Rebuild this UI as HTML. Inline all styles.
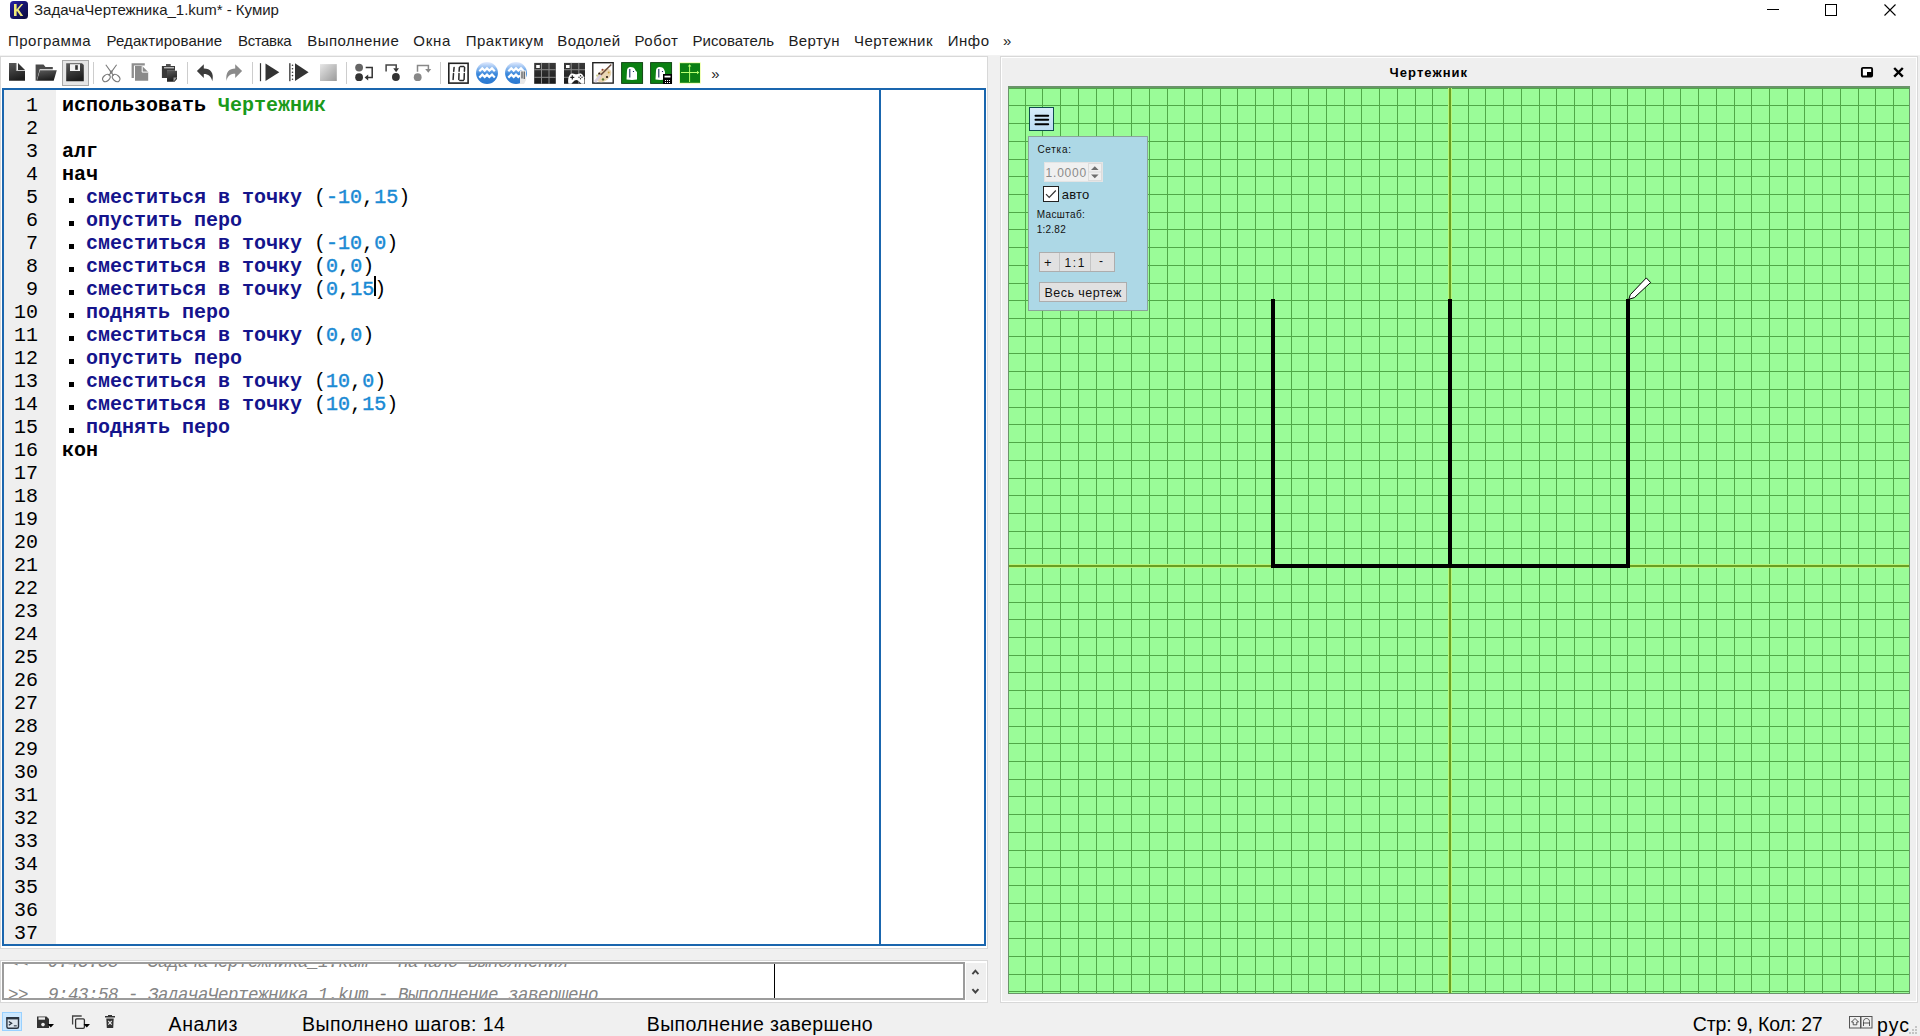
<!DOCTYPE html>
<html><head><meta charset="utf-8">
<style>
*{box-sizing:border-box}
html,body{margin:0;padding:0}
body{width:1920px;height:1036px;overflow:hidden;background:#f0f0f0;position:relative;font-family:"Liberation Sans",sans-serif;color:#000}
.a{position:absolute}
.t{white-space:pre}
.ui{font-family:"Liberation Sans",sans-serif;white-space:pre;line-height:1}
.ln{position:absolute;left:4px;width:34px;text-align:right;font:20px/23px "Liberation Mono",monospace;color:#000}
.cl{position:absolute;left:62px;font:bold 20px/23px "Liberation Mono",monospace;color:#000;white-space:pre}
.g{color:#1a9a1a}
.b{color:#14148c}
.n{color:#1a8ad4;font-weight:normal;-webkit-text-stroke:0.45px #1a8ad4}
.p{font-weight:normal}
.dot{display:inline-block;width:12px;height:23px;position:relative;vertical-align:top}
.dot:after{content:"";position:absolute;left:7px;top:12px;width:5px;height:4.5px;background:#000}
</style></head>
<body>
<div class="a" style="left:0;top:0;width:1920px;height:56px;background:#fff"></div>
<div class="a" style="left:0;top:55px;width:1920px;height:1px;background:#f2f2f2"></div>
<svg class="a" style="left:8px;top:0" width="22" height="20"><defs><linearGradient id="kg" x1="0" y1="0" x2="1" y2="1"><stop offset="0" stop-color="#2a20a8"/><stop offset="0.5" stop-color="#16146a"/><stop offset="1" stop-color="#0a0a3a"/></linearGradient></defs><rect x="2" y="1" width="18" height="18" rx="3.5" fill="url(#kg)"/><path d="M15.3 3.9H23V3.9" fill="none"/><path d="M14 4H16.6V9.4L21.2 4H23.2L18.6 9.6L23.2 15.9H20.5L17 11.1L16.6 11.5V15.9H14Z" transform="translate(-8 0)" fill="#f0e878"/></svg>
<div class="a t" style="left:34px;top:2.4px;font:normal normal 15px/1 'Liberation Sans';letter-spacing:0px;color:#1c1c1c;">ЗадачаЧертежника_1.kum* - Кумир</div>
<div class="a" style="left:1767px;top:9px;width:12px;height:1px;background:#000"></div>
<div class="a" style="left:1825px;top:4px;width:12px;height:12px;border:1px solid #000"></div>
<svg class="a" style="left:1884px;top:4px" width="12" height="12" viewBox="0 0 12 12"><path d="M0.5 0.5L11.5 11.5M11.5 0.5L0.5 11.5" stroke="#000" stroke-width="1.1"/></svg>
<div class="a t" style="left:8.0px;top:33.4px;font:normal normal 15px/1 'Liberation Sans';letter-spacing:0.5px;color:#1c1c1c;">Программа</div>
<div class="a t" style="left:106.5px;top:33.4px;font:normal normal 15px/1 'Liberation Sans';letter-spacing:0.1px;color:#1c1c1c;">Редактирование</div>
<div class="a t" style="left:238.0px;top:33.4px;font:normal normal 15px/1 'Liberation Sans';letter-spacing:-0.367px;color:#1c1c1c;">Вставка</div>
<div class="a t" style="left:307.3px;top:33.4px;font:normal normal 15px/1 'Liberation Sans';letter-spacing:0.467px;color:#1c1c1c;">Выполнение</div>
<div class="a t" style="left:413.2px;top:33.4px;font:normal normal 15px/1 'Liberation Sans';letter-spacing:0.8px;color:#1c1c1c;">Окна</div>
<div class="a t" style="left:465.7px;top:33.4px;font:normal normal 15px/1 'Liberation Sans';letter-spacing:0.5px;color:#1c1c1c;">Практикум</div>
<div class="a t" style="left:557.3px;top:33.4px;font:normal normal 15px/1 'Liberation Sans';letter-spacing:0.417px;color:#1c1c1c;">Водолей</div>
<div class="a t" style="left:634.4px;top:33.4px;font:normal normal 15px/1 'Liberation Sans';letter-spacing:0.575px;color:#1c1c1c;">Робот</div>
<div class="a t" style="left:692.5px;top:33.4px;font:normal normal 15px/1 'Liberation Sans';letter-spacing:0.022px;color:#1c1c1c;">Рисователь</div>
<div class="a t" style="left:788.4px;top:33.4px;font:normal normal 15px/1 'Liberation Sans';letter-spacing:0.38px;color:#1c1c1c;">Вертун</div>
<div class="a t" style="left:854.0px;top:33.4px;font:normal normal 15px/1 'Liberation Sans';letter-spacing:0.5px;color:#1c1c1c;">Чертежник</div>
<div class="a t" style="left:947.8px;top:33.4px;font:normal normal 15px/1 'Liberation Sans';letter-spacing:0.5px;color:#1c1c1c;">Инфо</div>
<div class="a t" style="left:1003.0px;top:33.4px;font:normal normal 15px/1 'Liberation Sans';letter-spacing:0px;color:#1c1c1c;">»</div>
<div class="a" style="left:0;top:56px;width:988px;height:893px;background:#fff;border:1px solid #d8d8d8"></div>
<svg class="a" style="left:0;top:0" width="740" height="90" viewBox="0 0 740 90">
<defs>
<linearGradient id="gd" x1="0" y1="0" x2="0.3" y2="1"><stop offset="0" stop-color="#5a5a5a"/><stop offset="1" stop-color="#1e1e1e"/></linearGradient>
<linearGradient id="gg" x1="0" y1="0" x2="1" y2="1"><stop offset="0" stop-color="#e6e6e6"/><stop offset="1" stop-color="#9a9a9a"/></linearGradient>
<linearGradient id="aq" x1="0" y1="0" x2="0" y2="1"><stop offset="0" stop-color="#e4ecff"/><stop offset="0.3" stop-color="#8ab8ee"/><stop offset="0.55" stop-color="#3a88dc"/><stop offset="1" stop-color="#2a78d0"/></linearGradient>
<linearGradient id="gr" x1="0" y1="0" x2="0" y2="1"><stop offset="0" stop-color="#3a3a3a"/><stop offset="0.5" stop-color="#2a2a2a"/><stop offset="1" stop-color="#1a1a1a"/></linearGradient>
</defs>
<!-- new doc -->
<path d="M9 63H16.3V70.8H25V80.8H9Z" fill="url(#gd)"/>
<path d="M18 63L25 70H18Z" fill="#333"/>
<path d="M16.5 63V70.5" stroke="#aaa" stroke-width="1.2"/>
<!-- open folder -->
<path d="M35.6 64.4H43.5L45.5 67H52.8V69.3H39.7L36.8 80.8H35.6Z" fill="#4a4a4a"/>
<path d="M39.9 70.2H56.8L53.7 80.8H36.9Z" fill="url(#gd)"/>
<!-- save button -->
<rect x="62.5" y="60.5" width="26" height="25" fill="#e6e6e6" stroke="#a9a9a9"/>
<path d="M66.2 63.3H82L83.8 65.1V81.3H66.2Z" fill="url(#gd)"/>
<rect x="70" y="64.2" width="10" height="6.8" fill="#f2f2f2"/>
<rect x="75.2" y="65.2" width="2.6" height="4.6" fill="#333"/>
<!-- separators -->
<rect x="93" y="62" width="1" height="22" fill="#cdcdcd"/>
<rect x="187" y="62" width="1" height="22" fill="#cdcdcd"/>
<rect x="252" y="62" width="1" height="22" fill="#cdcdcd"/>
<rect x="346" y="62" width="1" height="22" fill="#cdcdcd"/>
<rect x="440" y="62" width="1" height="22" fill="#cdcdcd"/>
<!-- scissors -->
<g fill="none" stroke="#7a7a7a" stroke-width="1.1">
<path d="M105.8 64.8L113.6 75.6M116.6 64.8L108.8 75.6"/>
<circle cx="111.2" cy="72" r="0.9"/>
<ellipse cx="106.4" cy="78" rx="4.2" ry="3" transform="rotate(-42 106.4 78)"/>
<ellipse cx="116.1" cy="78" rx="4.2" ry="3" transform="rotate(42 116.1 78)"/>
</g>
<!-- copy -->
<path d="M131.6 63.3H144.8V65.6H133.9V78H131.6Z" fill="#8e8e8e"/>
<path d="M135 66.1H142.2L148.2 72.1V80.8H135Z" fill="#8a8a8a"/>
<path d="M142.2 66.1V72.1H148.2" fill="none" stroke="#fff" stroke-width="1"/>
<!-- paste -->
<path d="M161.9 66.1H175V70.8H167V78H161.9Z" fill="#3a3a3a"/>
<rect x="166" y="64" width="4.7" height="2.4" fill="#555"/>
<rect x="164" y="67.3" width="10" height="1" fill="#eee"/>
<path d="M167 70.8H177V79L174.5 81.8H167Z" fill="url(#gd)"/>
<path d="M177 77.5L173.5 81.8V77.5Z" fill="#999"/>
<!-- undo -->
<path d="M196.9 71.1L203.8 64.3V68.4C210 68.2 214.5 72.5 212.3 81.2C211.2 76 208 73.8 203.8 73.9V78Z" fill="#3c3c3c"/>
<!-- redo -->
<path d="M242.1 71.1L235.2 64.3V68.6C229.5 68.6 225.2 72 226.5 81C227.5 75.5 231 73.8 235.2 73.8V78Z" fill="#8a8a8a"/>
<!-- run -->
<rect x="259.9" y="63.2" width="1.2" height="18" fill="#333"/>
<path d="M265.5 63.5L279.3 72.3L265.5 81Z" fill="#333"/>
<!-- step run -->
<rect x="289.2" y="63.2" width="1.3" height="18" fill="#333"/>
<g fill="#333"><circle cx="292.5" cy="65.2" r="0.8"/><circle cx="292.5" cy="68.8" r="0.8"/><circle cx="292.5" cy="72.2" r="0.8"/><circle cx="292.5" cy="75.6" r="0.8"/><circle cx="292.5" cy="79.2" r="0.8"/></g>
<path d="M295 63.3L308.6 72.3L295 81Z" fill="#333"/>
<!-- stop -->
<rect x="320" y="64.1" width="16.8" height="16.9" fill="url(#gg)"/>
<!-- step over -->
<circle cx="359.1" cy="67.6" r="3.9" fill="#666"/>
<circle cx="359.1" cy="77.2" r="3.9" fill="#333"/>
<path d="M365.7 67.6H372.2V77.5H367" fill="none" stroke="#333" stroke-width="1.5"/>
<path d="M364.6 77.5L368.2 74.6V80.4Z" fill="#333"/>
<!-- step in -->
<path d="M386.1 71.6V65H396.2V68.5" fill="none" stroke="#444" stroke-width="1.5"/>
<path d="M393.3 68.3H399L396.1 72.2Z" fill="#333"/>
<circle cx="395.9" cy="77" r="3.9" fill="#333"/>
<!-- step out -->
<path d="M417.5 71.8V65.5H428.4V69" fill="none" stroke="#888" stroke-width="1.5"/>
<path d="M425.2 69H431.2L428.3 72.8Z" fill="#888"/>
<circle cx="417.7" cy="77.2" r="3.9" fill="#888"/>
<!-- 10 box -->
<rect x="448.8" y="63.3" width="19.3" height="19.8" fill="#fff" stroke="#222" stroke-width="1.6"/>
<g stroke="#2a2a2a" stroke-width="1.5" fill="none" stroke-linecap="round">
<path d="M454.1 67.4L453.7 71.3M453.5 73.6L453.1 79.5"/>
<path d="M459.4 67.4L459.1 71.3M459 73.6L458.8 79.5M464.6 67.4L464.4 71.3M464.3 73.6L464.1 79.5M460.3 66.4H463.8M459.9 80.5H463.4"/>
</g>
<!-- aquarius 1 -->
<circle cx="487" cy="72.95" r="10.95" fill="url(#aq)"/>
<path d="M479.3 71.3L482.3 68.3L484.7 70.6L487 68.3L489.3 70.6L492 68.3L494.8 71.2" fill="none" stroke="#fff" stroke-width="2.2" stroke-linejoin="miter"/>
<path d="M479.3 77.6L482.3 74.6L484.7 76.9L487 74.6L489.3 76.9L492 74.6L494.8 77.5" fill="none" stroke="#fff" stroke-width="2.2"/>
<!-- aquarius 2 -->
<circle cx="516" cy="72.95" r="10.95" fill="url(#aq)"/>
<path d="M508.3 71.3L511.3 68.3L513.7 70.6L516 68.3L518.3 70.6L521 68.3L523.8 71.2" fill="none" stroke="#fff" stroke-width="2.2"/>
<path d="M508.3 77.6L511.3 74.6L513.7 76.9L516 74.6L518.3 76.9L520 75.5" fill="none" stroke="#fff" stroke-width="2.2"/>
<path d="M520 70.5H526V80L524 84H520Z" fill="#e8e8e8"/>
<g stroke="#222" stroke-width="0.9"><path d="M522 71.5V78.5M524.2 71.5V79"/></g>
<!-- grid -->
<rect x="534.2" y="62.9" width="21.6" height="20.9" fill="url(#gr)"/>
<g fill="#8a8a8a"><rect x="541" y="62.9" width="1" height="20.9"/><rect x="548.5" y="62.9" width="1" height="20.9"/><rect x="534.2" y="69.2" width="21.6" height="1"/><rect x="534.2" y="76.8" width="21.6" height="1"/></g>
<rect x="536.2" y="65" width="3.6" height="3" fill="#fff"/>
<!-- grid game -->
<rect x="564" y="62.9" width="21" height="20.9" fill="url(#gr)"/>
<g fill="#8a8a8a"><rect x="570.7" y="62.9" width="1" height="20.9"/><rect x="578.3" y="62.9" width="1" height="20.9"/><rect x="564" y="69.2" width="21" height="1"/><rect x="564" y="76.8" width="21" height="1"/></g>
<rect x="566" y="65" width="3.6" height="3" fill="#fff"/>
<path d="M568.5 83.8C567.5 80 568.5 74.5 571.8 73.5C573.8 73 575 74.3 576.3 74.3C577.6 74.3 578.8 73 580.8 73.5C584 74.5 585 80 584.3 83.8H581.5L578 80.5C576.5 79.8 576 79.8 574.6 80.5L571.2 83.8Z" fill="#fff"/>
<g fill="#222"><rect x="570.3" y="76.8" width="4" height="1.2"/><rect x="571.7" y="75.3" width="1.2" height="4.2"/><circle cx="580.5" cy="75.8" r="0.7"/><circle cx="580.5" cy="78.8" r="0.7"/><circle cx="579" cy="77.3" r="0.7"/><circle cx="582" cy="77.3" r="0.7"/></g>
<!-- painter -->
<rect x="592.8" y="62.7" width="20.4" height="20.4" fill="#fff" stroke="#222" stroke-width="1.4"/>
<ellipse cx="604" cy="75.3" rx="8.4" ry="5.6" fill="#ead6b2" transform="rotate(-40 604 75.3)"/>
<circle cx="599.3" cy="73.7" r="1.1" fill="#2a1a10"/><circle cx="607" cy="77" r="1.1" fill="#2a1a10"/>
<circle cx="603" cy="79.4" r="1.2" fill="#5a7a30"/><circle cx="608.7" cy="72.6" r="1" fill="#c8a040"/>
<circle cx="602.5" cy="69.8" r="1" fill="#904030"/><circle cx="597" cy="75.5" r="1" fill="#c8d090"/>
<path d="M611.3 64.5L600.5 75.2" stroke="#6a4a3a" stroke-width="1.5"/>
<path d="M600.8 75L595 81.8" stroke="#d8d0e0" stroke-width="2.6"/>
<!-- green 1 -->
<rect x="621.6" y="62.6" width="21" height="20.8" fill="#0b7f12" stroke="#0a3d0c" stroke-width="0.9"/>
<path d="M627 70.5C627 68.5 628.5 67 630.5 67C633 67 635 68 635.5 70.5L637 72V79.5C634 80 630 80 626.5 79.5Z" fill="#fff"/>
<path d="M629.8 69V77.5M633.5 71V72" stroke="#1a2a60" stroke-width="1.1"/>
<!-- green 2 -->
<rect x="650.6" y="62.6" width="21" height="20.8" fill="#0b7f12" stroke="#0a3d0c" stroke-width="0.9"/>
<path d="M656 70.5C656 68.5 657.5 67 659.5 67C662 67 664 68 664.5 70.5L665 72V79.5C662 80 659 80 655.5 79.5Z" fill="#fff"/>
<path d="M658.8 69V77.5M662.5 71V72" stroke="#1a2a60" stroke-width="1.1"/>
<rect x="663" y="74" width="9" height="10" fill="#000"/>
<rect x="664.5" y="75.7" width="6" height="1.8" fill="#fff"/>
<g fill="#fff" shape-rendering="crispEdges"><rect x="665" y="80" width="1" height="1"/><rect x="667" y="80" width="1" height="1"/><rect x="669" y="80" width="1" height="1"/><rect x="665" y="82" width="1" height="1"/><rect x="667" y="82" width="1" height="1"/><rect x="669" y="82" width="1" height="1"/></g>
<!-- green axes -->
<rect x="679.3" y="62.4" width="21.4" height="21.2" fill="#eaff9a"/>
<rect x="680" y="63.2" width="20" height="19.6" fill="#0b7f12"/>
<path d="M689.6 65V82M681 72.5H698.5" stroke="#b8ff70" stroke-width="1"/>
<path d="M689.6 64.3L687.8 66.6H691.4Z M699.3 72.5L697 70.7V74.3Z" fill="#b8ff70"/>
</svg>
<div class="a ui" style="left:711.3px;top:66.4px;font-size:15px;color:#222">»</div>

<div class="a" style="left:2px;top:88px;width:984px;height:858px;border:2px solid #1a66ae;background:#fff"></div>
<div class="a" style="left:4px;top:90px;width:52px;height:854px;background:#efefef"></div>
<div class="a" style="left:879px;top:90px;width:2px;height:854px;background:#1a66ae"></div>
<div class="ln" style="top:94px">1</div>
<div class="ln" style="top:117px">2</div>
<div class="ln" style="top:140px">3</div>
<div class="ln" style="top:163px">4</div>
<div class="ln" style="top:186px">5</div>
<div class="ln" style="top:209px">6</div>
<div class="ln" style="top:232px">7</div>
<div class="ln" style="top:255px">8</div>
<div class="ln" style="top:278px">9</div>
<div class="ln" style="top:301px">10</div>
<div class="ln" style="top:324px">11</div>
<div class="ln" style="top:347px">12</div>
<div class="ln" style="top:370px">13</div>
<div class="ln" style="top:393px">14</div>
<div class="ln" style="top:416px">15</div>
<div class="ln" style="top:439px">16</div>
<div class="ln" style="top:462px">17</div>
<div class="ln" style="top:485px">18</div>
<div class="ln" style="top:508px">19</div>
<div class="ln" style="top:531px">20</div>
<div class="ln" style="top:554px">21</div>
<div class="ln" style="top:577px">22</div>
<div class="ln" style="top:600px">23</div>
<div class="ln" style="top:623px">24</div>
<div class="ln" style="top:646px">25</div>
<div class="ln" style="top:669px">26</div>
<div class="ln" style="top:692px">27</div>
<div class="ln" style="top:715px">28</div>
<div class="ln" style="top:738px">29</div>
<div class="ln" style="top:761px">30</div>
<div class="ln" style="top:784px">31</div>
<div class="ln" style="top:807px">32</div>
<div class="ln" style="top:830px">33</div>
<div class="ln" style="top:853px">34</div>
<div class="ln" style="top:876px">35</div>
<div class="ln" style="top:899px">36</div>
<div class="ln" style="top:922px">37</div>
<div class="cl" style="top:94px">использовать <span class="g">Чертежник</span></div>
<div class="cl" style="top:140px">алг</div>
<div class="cl" style="top:163px">нач</div>
<div class="cl" style="top:186px"><span class="dot"></span> <span class="b">сместиться в точку</span> <span class="p">(</span><span class="n">-10</span><span class="p">,</span><span class="n">15</span><span class="p">)</span></div>
<div class="cl" style="top:209px"><span class="dot"></span> <span class="b">опустить перо</span></div>
<div class="cl" style="top:232px"><span class="dot"></span> <span class="b">сместиться в точку</span> <span class="p">(</span><span class="n">-10</span><span class="p">,</span><span class="n">0</span><span class="p">)</span></div>
<div class="cl" style="top:255px"><span class="dot"></span> <span class="b">сместиться в точку</span> <span class="p">(</span><span class="n">0</span><span class="p">,</span><span class="n">0</span><span class="p">)</span></div>
<div class="cl" style="top:278px"><span class="dot"></span> <span class="b">сместиться в точку</span> <span class="p">(</span><span class="n">0</span><span class="p">,</span><span class="n">15</span><span class="p">)</span></div>
<div class="cl" style="top:301px"><span class="dot"></span> <span class="b">поднять перо</span></div>
<div class="cl" style="top:324px"><span class="dot"></span> <span class="b">сместиться в точку</span> <span class="p">(</span><span class="n">0</span><span class="p">,</span><span class="n">0</span><span class="p">)</span></div>
<div class="cl" style="top:347px"><span class="dot"></span> <span class="b">опустить перо</span></div>
<div class="cl" style="top:370px"><span class="dot"></span> <span class="b">сместиться в точку</span> <span class="p">(</span><span class="n">10</span><span class="p">,</span><span class="n">0</span><span class="p">)</span></div>
<div class="cl" style="top:393px"><span class="dot"></span> <span class="b">сместиться в точку</span> <span class="p">(</span><span class="n">10</span><span class="p">,</span><span class="n">15</span><span class="p">)</span></div>
<div class="cl" style="top:416px"><span class="dot"></span> <span class="b">поднять перо</span></div>
<div class="cl" style="top:439px">кон</div>
<div class="a" style="left:374px;top:276px;width:2px;height:20px;background:#000"></div>
<div class="a" style="left:0;top:960px;width:988px;height:43px;background:#fff;border:1px solid #d8d8d8"></div>
<div class="a" style="left:966px;top:963px;width:20px;height:37px;background:#efefef"></div>
<div class="a" style="left:2px;top:962px;width:963px;height:38px;border:2px solid #9c9c9c;background:#fff"></div>
<div class="a" style="left:4px;top:964px;width:958px;height:34px;overflow:hidden">
<div class="a t" style="left:4.0px;top:-10.399999999999977px;font:italic normal 17.5px/1 'Liberation Mono';letter-spacing:-0.5px;color:#848484;">&lt;&lt;  9:43:58 - ЗадачаЧертежника_1.kum - Начало выполнения</div>
<div class="a t" style="left:4.0px;top:22.799999999999955px;font:italic normal 17.5px/1 'Liberation Mono';letter-spacing:-0.5px;color:#848484;">&gt;&gt;  9:43:58 - ЗадачаЧертежника_1.kum - Выполнение завершено</div>
</div>
<div class="a" style="left:774px;top:964px;width:1px;height:34px;background:#000"></div>
<svg class="a" style="left:964px;top:962px" width="22" height="38"><path d="M8.4 12.1L11.4 8.7L14.4 12.1M8.4 27.1L11.4 30.5L14.4 27.1" stroke="#444" stroke-width="1.9" fill="none"/></svg>
<div class="a" style="left:1000px;top:56px;width:918px;height:947px;background:#efefef;border:1px solid #d8d8d8;box-shadow:inset 0 0 0 1px #fff"></div>
<div class="a t" style="left:1389.6px;top:66.2px;font:normal bold 13px/1 'Liberation Sans';letter-spacing:1.05px;color:#000;">Чертежник</div>
<svg class="a" style="left:1860px;top:66px" width="50" height="12"><rect x="1.9" y="1.9" width="10.2" height="8.6" rx="1" fill="#fff" stroke="#000" stroke-width="1.9"/><rect x="7" y="6" width="5" height="4.5" fill="#000"/><path d="M34.2 2L42.8 10.6M42.8 2L34.2 10.6" stroke="#000" stroke-width="2.4"/></svg>
<svg class="a" style="left:1008px;top:86px" width="902" height="908" viewBox="1008 86 902 908" shape-rendering="crispEdges">
<rect x="1008" y="86" width="902" height="908" fill="#9afc98"/>
<g fill="#50a848"><rect x="1008" y="88" width="902" height="1"/><rect x="1008" y="105" width="902" height="1"/><rect x="1008" y="123" width="902" height="1"/><rect x="1025" y="86" width="1" height="908"/><rect x="1008" y="141" width="902" height="1"/><rect x="1042" y="86" width="1" height="908"/><rect x="1008" y="159" width="902" height="1"/><rect x="1060" y="86" width="1" height="908"/><rect x="1008" y="176" width="902" height="1"/><rect x="1078" y="86" width="1" height="908"/><rect x="1008" y="194" width="902" height="1"/><rect x="1096" y="86" width="1" height="908"/><rect x="1008" y="212" width="902" height="1"/><rect x="1113" y="86" width="1" height="908"/><rect x="1008" y="229" width="902" height="1"/><rect x="1131" y="86" width="1" height="908"/><rect x="1008" y="247" width="902" height="1"/><rect x="1149" y="86" width="1" height="908"/><rect x="1008" y="265" width="902" height="1"/><rect x="1167" y="86" width="1" height="908"/><rect x="1008" y="283" width="902" height="1"/><rect x="1184" y="86" width="1" height="908"/><rect x="1008" y="300" width="902" height="1"/><rect x="1202" y="86" width="1" height="908"/><rect x="1008" y="318" width="902" height="1"/><rect x="1220" y="86" width="1" height="908"/><rect x="1008" y="336" width="902" height="1"/><rect x="1237" y="86" width="1" height="908"/><rect x="1008" y="353" width="902" height="1"/><rect x="1255" y="86" width="1" height="908"/><rect x="1008" y="371" width="902" height="1"/><rect x="1273" y="86" width="1" height="908"/><rect x="1008" y="389" width="902" height="1"/><rect x="1291" y="86" width="1" height="908"/><rect x="1008" y="407" width="902" height="1"/><rect x="1308" y="86" width="1" height="908"/><rect x="1008" y="424" width="902" height="1"/><rect x="1326" y="86" width="1" height="908"/><rect x="1008" y="442" width="902" height="1"/><rect x="1344" y="86" width="1" height="908"/><rect x="1008" y="460" width="902" height="1"/><rect x="1361" y="86" width="1" height="908"/><rect x="1008" y="478" width="902" height="1"/><rect x="1379" y="86" width="1" height="908"/><rect x="1008" y="495" width="902" height="1"/><rect x="1397" y="86" width="1" height="908"/><rect x="1008" y="513" width="902" height="1"/><rect x="1415" y="86" width="1" height="908"/><rect x="1008" y="531" width="902" height="1"/><rect x="1432" y="86" width="1" height="908"/><rect x="1008" y="548" width="902" height="1"/><rect x="1450" y="86" width="1" height="908"/><rect x="1008" y="566" width="902" height="1"/><rect x="1468" y="86" width="1" height="908"/><rect x="1008" y="584" width="902" height="1"/><rect x="1485" y="86" width="1" height="908"/><rect x="1008" y="602" width="902" height="1"/><rect x="1503" y="86" width="1" height="908"/><rect x="1008" y="619" width="902" height="1"/><rect x="1521" y="86" width="1" height="908"/><rect x="1008" y="637" width="902" height="1"/><rect x="1539" y="86" width="1" height="908"/><rect x="1008" y="655" width="902" height="1"/><rect x="1556" y="86" width="1" height="908"/><rect x="1008" y="672" width="902" height="1"/><rect x="1574" y="86" width="1" height="908"/><rect x="1008" y="690" width="902" height="1"/><rect x="1592" y="86" width="1" height="908"/><rect x="1008" y="708" width="902" height="1"/><rect x="1610" y="86" width="1" height="908"/><rect x="1008" y="726" width="902" height="1"/><rect x="1627" y="86" width="1" height="908"/><rect x="1008" y="743" width="902" height="1"/><rect x="1645" y="86" width="1" height="908"/><rect x="1008" y="761" width="902" height="1"/><rect x="1663" y="86" width="1" height="908"/><rect x="1008" y="779" width="902" height="1"/><rect x="1680" y="86" width="1" height="908"/><rect x="1008" y="796" width="902" height="1"/><rect x="1698" y="86" width="1" height="908"/><rect x="1008" y="814" width="902" height="1"/><rect x="1716" y="86" width="1" height="908"/><rect x="1008" y="832" width="902" height="1"/><rect x="1734" y="86" width="1" height="908"/><rect x="1008" y="850" width="902" height="1"/><rect x="1751" y="86" width="1" height="908"/><rect x="1008" y="867" width="902" height="1"/><rect x="1769" y="86" width="1" height="908"/><rect x="1008" y="885" width="902" height="1"/><rect x="1787" y="86" width="1" height="908"/><rect x="1008" y="903" width="902" height="1"/><rect x="1804" y="86" width="1" height="908"/><rect x="1008" y="921" width="902" height="1"/><rect x="1822" y="86" width="1" height="908"/><rect x="1008" y="938" width="902" height="1"/><rect x="1840" y="86" width="1" height="908"/><rect x="1008" y="956" width="902" height="1"/><rect x="1858" y="86" width="1" height="908"/><rect x="1008" y="974" width="902" height="1"/><rect x="1875" y="86" width="1" height="908"/><rect x="1008" y="991" width="902" height="1"/><rect x="1893" y="86" width="1" height="908"/></g>
<g fill="#b6f57a"><rect x="1448" y="86" width="1" height="908"/><rect x="1451" y="86" width="1" height="908"/><rect x="1008" y="564" width="902" height="1"/><rect x="1008" y="567" width="902" height="1"/></g><g fill="#69a023"><rect x="1449" y="86" width="2" height="908"/><rect x="1008" y="565" width="902" height="2"/></g>
<g fill="#6a946a"><rect x="1008" y="86" width="902" height="2"/><rect x="1008" y="86" width="1" height="908"/><rect x="1909" y="86" width="1" height="908"/><rect x="1008" y="993" width="902" height="1"/></g>
<g fill="#000"><rect x="1271" y="299" width="4" height="269"/><rect x="1448" y="299" width="4" height="269"/><rect x="1626" y="299" width="4" height="269"/><rect x="1271" y="564" width="359" height="4"/></g>
<path d="M1628.8 299.3L1630.3 294.7L1646.3 277.9L1650.6 282.5L1634.4 297.6Z" fill="#fff" stroke="#000" stroke-width="1" shape-rendering="auto"/>
</svg>
<div class="a" style="left:1029px;top:107px;width:25px;height:24px;border:1px solid #0e4e4e;background:linear-gradient(#d8ecfa,#bcdcf2)"></div>
<svg class="a" style="left:1029px;top:107px" width="25" height="24"><path d="M6.5 8.7H19.2M6.5 12.8H19.2M6.5 17.2H19.2" stroke="#000" stroke-width="2" stroke-linecap="round"/></svg>
<div class="a" style="left:1028px;top:136px;width:120px;height:175px;background:#add8e6;border:1px solid #8aa59a"></div>
<div class="a t" style="left:1037.4px;top:145px;font:normal 10px/1 'Liberation Sans';letter-spacing:0.72px;color:#111">Сетка:</div>
<div class="a" style="left:1044px;top:162px;width:59px;height:20px;background:#f0f0f0;border:1px solid #e4e4e4"></div>
<div class="a t" style="left:1045.6px;top:167px;font:normal 12px/1 'Liberation Sans';letter-spacing:0.78px;color:#8a8a8a">1.0000</div>
<div class="a" style="left:1088px;top:163px;width:14px;height:18px;border:1px solid #dcdcdc;background:#f0f0f0"></div>
<svg class="a" style="left:1088px;top:163px" width="14" height="18"><path d="M3 7L6.8 3.2L10.6 7Z M3 11.5L6.8 15.3L10.6 11.5Z" fill="#6e6e6e"/><path d="M1 9H13" stroke="#dcdcdc"/></svg>
<div class="a" style="left:1043px;top:186px;width:16px;height:16px;border:1px solid #222;background:#fff"></div>
<svg class="a" style="left:1043px;top:186px" width="16" height="16"><path d="M3 8.2L6.2 11.5L12.8 4.5" stroke="#333" stroke-width="1.2" fill="none"/></svg>
<div class="a t" style="left:1061.8px;top:188px;font:normal 13px/1 'Liberation Sans';letter-spacing:0.167px;color:#111">авто</div>
<div class="a t" style="left:1036.8px;top:210px;font:normal 10px/1 'Liberation Sans';letter-spacing:0.357px;color:#111">Масштаб:</div>
<div class="a t" style="left:1036.8px;top:225px;font:normal 10px/1 'Liberation Sans';letter-spacing:0.22px;color:#111">1:2.82</div>
<div class="a" style="left:1039px;top:252px;width:76px;height:20px;background:#e1e1e1;border:1px solid #adadad"></div>
<div class="a" style="left:1059px;top:253px;width:1px;height:18px;background:#c4c4c4"></div>
<div class="a" style="left:1090px;top:253px;width:1px;height:18px;background:#c4c4c4"></div>
<div class="a t" style="left:1044px;top:256px;font:normal 13px/1 'Liberation Sans';color:#111">+</div>
<div class="a t" style="left:1064.5px;top:257px;font:normal 12px/1 'Liberation Sans';letter-spacing:1.65px;color:#111">1:1</div>
<div class="a t" style="left:1099px;top:255px;font:normal 12px/1 'Liberation Sans';color:#111">-</div>
<div class="a" style="left:1039px;top:282px;width:88px;height:20px;background:#e1e1e1;border:1px solid #adadad"></div>
<div class="a t" style="left:1044.5px;top:287px;font:normal 12.5px/1 'Liberation Sans';letter-spacing:0.45px;color:#111">Весь чертеж</div>

<div class="a" style="left:2px;top:1012px;width:20px;height:19px;background:#cce8ff;border:1px solid #99d1ff"></div>
<svg class="a" style="left:0;top:1006px" width="130" height="30">
<rect x="6.9" y="11.6" width="11.6" height="10.6" rx="1.5" fill="#dde6ee" stroke="#2a3440" stroke-width="1.4"/>
<rect x="6.2" y="11" width="13" height="2.4" fill="#2a3440"/>
<path d="M8.8 15.5L11.6 17.3L8.8 19.2" stroke="#2a3440" stroke-width="1.3" fill="none"/><rect x="13.8" y="19.3" width="3" height="1.1" fill="#2a3440"/>
<path d="M37 10.5H46.5L49 13V21.9H37Z" fill="#333"/><rect x="38.5" y="11.3" width="6.5" height="2.4" fill="#eee"/><circle cx="43" cy="18.6" r="1.8" fill="#eee"/>
<path d="M47.5 18H54L50.8 21.5Z" fill="#000"/>
<path d="M72.6 18.5V10H81.7" stroke="#444" stroke-width="1.3" fill="none"/>
<rect x="75.6" y="12.8" width="8.8" height="9.5" rx="1.2" fill="none" stroke="#333" stroke-width="1.3"/>
<path d="M83.5 18H90L86.8 21.6Z" fill="#000"/>
<rect x="105" y="10" width="10" height="1.5" fill="#333"/><rect x="108" y="9" width="4" height="1.5" fill="#333"/>
<path d="M106.3 12.5H113.7L113.2 22H106.8Z" fill="#333"/><path d="M108.3 15L111.7 18.6M111.7 15L108.3 18.6" stroke="#eee" stroke-width="1.1"/>
</svg>
<div class="a t" style="left:168.6px;top:1015px;font:normal normal 19.5px/1 'Liberation Sans';letter-spacing:0.6px;color:#000;">Анализ</div>
<div class="a t" style="left:302.0px;top:1015px;font:normal normal 19.5px/1 'Liberation Sans';letter-spacing:0.444px;color:#000;">Выполнено шагов: 14</div>
<div class="a t" style="left:646.8px;top:1015px;font:normal normal 19.5px/1 'Liberation Sans';letter-spacing:0.382px;color:#000;">Выполнение завершено</div>
<div class="a t" style="left:1692.8px;top:1015px;font:normal normal 19.5px/1 'Liberation Sans';letter-spacing:-0.154px;color:#000;">Стр: 9, Кол: 27</div>
<svg class="a" style="left:1849px;top:1016px" width="25" height="13"><rect x="0.5" y="0.5" width="11" height="11.5" fill="none" stroke="#555"/><rect x="12" y="0.5" width="11" height="11.5" fill="none" stroke="#555"/><path d="M6 2.5L9.5 6H7.8V8.8H4.2V6H2.5Z" fill="none" stroke="#444" stroke-width="0.9"/><path d="M14.5 10V5.5C14.5 3.5 16 2.5 17.5 2.5C19 2.5 20.5 3.5 20.5 5.5V10M14.5 7H20.5" fill="none" stroke="#444" stroke-width="0.9"/></svg>
<div class="a t" style="left:1877.0px;top:1016px;font:normal normal 19.5px/1 'Liberation Sans';letter-spacing:1.0px;color:#000;">рус</div>
<svg class="a" style="left:1906px;top:1024px" width="14" height="12"><g fill="#c4c4c4"><rect x="9" y="2" width="2" height="2"/><rect x="6" y="5" width="2" height="2"/><rect x="9" y="5" width="2" height="2"/><rect x="3" y="8" width="2" height="2"/><rect x="6" y="8" width="2" height="2"/><rect x="9" y="8" width="2" height="2"/></g></svg>
</body></html>
